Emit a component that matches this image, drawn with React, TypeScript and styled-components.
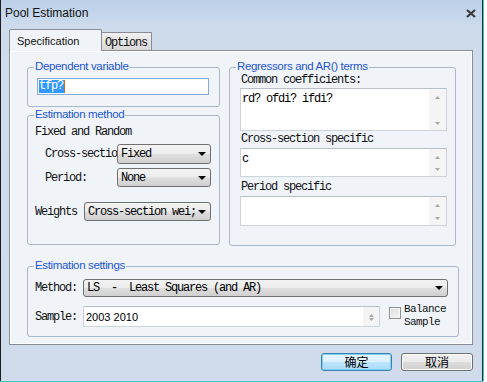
import React from 'react';
import styled, { createGlobalStyle } from 'styled-components';

const MONO = `"Liberation Mono", "DejaVu Sans Mono", monospace`;
const SANS = `"Liberation Sans", Arial, sans-serif`;
const CJK = `"Noto Sans CJK SC", "Liberation Sans", sans-serif`;
const PAGE_BG = '#f0f4f9';
const MONO_SIZE = '12px';
const MONO_SPACING = '-1.2px';

const Global = createGlobalStyle`
  html, body { margin: 0; padding: 0; background: #ffffff; }
  body { width: 487px; height: 382px; overflow: hidden; }
`;

const Window = styled.div`
  box-sizing: border-box;
  width: 483px;
  height: 381px;
  background: linear-gradient(#bcd0e8 0px, #c6d7ec 16px, #cedbeb 28px, #d0dcec 100%);
  border-left: 1px solid #1d1d1d;
  border-right: 1px solid #2a2a2a;
  box-shadow: 1px 0 0 #3ec6cf, 0 1px 0 #3ec6cf;
  display: flex;
  flex-direction: column;
`;

const TitleBar = styled.div`
  height: 29px;
  display: flex;
  align-items: flex-start;
  justify-content: space-between;
  padding: 6px 6px 0 4px;
  box-sizing: border-box;
`;

const Title = styled.div`
  font-family: ${SANS};
  font-size: 12px;
  line-height: 14px;
  color: #111;
`;

const CloseBtn = styled.div`
  width: 10px;
  height: 14px;
  display: flex;
  align-items: center;
  justify-content: center;
`;

const Body = styled.div`
  display: flex;
  flex-direction: column;
  padding: 0 9px 0 8px;
`;

const TabStrip = styled.div`
  display: flex;
  align-items: flex-end;
  height: 22px;
  margin-bottom: -1px;
  position: relative;
  z-index: 1;
`;

const ActiveTab = styled.div`
  box-sizing: border-box;
  width: 93px;
  height: 22px;
  background: ${PAGE_BG};
  border: 1px solid #898c95;
  border-bottom: none;
  border-radius: 2px 2px 0 0;
  font-family: ${SANS};
  font-size: 11px;
  line-height: 14px;
  padding: 4px 0 0 7px;
  color: #111;
`;

const InactiveTab = styled.div`
  box-sizing: border-box;
  width: 50px;
  height: 18px;
  margin-bottom: 1px;
  background: linear-gradient(#f0f0f0, #e4e4e4 50%, #d8d8d8);
  border: 1px solid #898c95;
  border-left: none;
  border-bottom: none;
  font-family: ${MONO};
  font-size: ${MONO_SIZE};
  letter-spacing: ${MONO_SPACING};
  line-height: 14px;
  padding: 3px 0 0 3px;
  color: #111;
`;

const Page = styled.div`
  box-sizing: border-box;
  width: 464px;
  height: 295px;
  background: ${PAGE_BG};
  border: 1px solid #898c95;
  box-shadow: inset 1px 1px 0 #ffffff, inset -1px -1px 0 #ffffff;
  padding: 16px 0 0 17px;
  display: grid;
  grid-template-columns: 193px 227px;
  column-gap: 9px;
  row-gap: 12px;
  align-items: start;
`;

const LeftCol = styled.div`
  display: flex;
  flex-direction: column;
  gap: 8px;
`;

const Group = styled.div<{ $h: number; $w?: number; $pt: number; $pl: number; $span?: boolean }>`
  position: relative;
  box-sizing: border-box;
  height: ${p => p.$h}px;
  width: ${p => (p.$w ? `${p.$w}px` : 'auto')};
  border: 1px solid #a9b7ca;
  border-radius: 3px;
  padding: ${p => p.$pt}px 0 0 ${p => p.$pl}px;
  grid-column: ${p => (p.$span ? '1 / span 2' : 'auto')};
  display: flex;
  flex-direction: column;
  align-items: flex-start;
`;

const Legend = styled.div`
  position: absolute;
  top: -8px;
  left: 6px;
  padding: 0 1px;
  background: ${PAGE_BG};
  font-family: ${SANS};
  font-size: 11.5px;
  letter-spacing: -0.35px;
  line-height: 13px;
  color: #1d55d4;
  white-space: nowrap;
`;

const MonoText = styled.div<{ $mt?: number; $ml?: number }>`
  font-family: ${MONO};
  font-size: ${MONO_SIZE};
  letter-spacing: ${MONO_SPACING};
  line-height: 14px;
  color: #111;
  white-space: nowrap;
  margin-top: ${p => p.$mt || 0}px;
  margin-left: ${p => p.$ml || 0}px;
`;

const FieldRow = styled.div<{ $mt: number; $indent: number }>`
  display: flex;
  align-items: center;
  margin-top: ${p => p.$mt}px;
  margin-left: ${p => p.$indent}px;
`;

const FieldLabel = styled.div<{ $w: number }>`
  width: ${p => p.$w}px;
  flex: none;
  white-space: nowrap;
  font-family: ${MONO};
  font-size: ${MONO_SIZE};
  letter-spacing: ${MONO_SPACING};
  line-height: 14px;
  color: #111;
`;

const Combo = styled.div<{ $w: number; $h: number }>`
  box-sizing: border-box;
  width: ${p => p.$w}px;
  height: ${p => p.$h}px;
  border: 1px solid #707070;
  border-radius: 3px;
  background: linear-gradient(#f3f3f3, #ebebeb 48%, #dedede 52%, #d0d0d0);
  display: flex;
  align-items: center;
  justify-content: space-between;
  padding: 0 4px 0 3px;
`;

const ComboText = styled.span`
  font-family: ${MONO};
  font-size: ${MONO_SIZE};
  letter-spacing: ${MONO_SPACING};
  line-height: 14px;
  color: #000;
  white-space: pre;
`;

const EditBox = styled.div<{ $w: number; $h: number }>`
  box-sizing: border-box;
  width: ${p => p.$w}px;
  height: ${p => p.$h}px;
  border: 1px solid #86aad6;
  background: #ffffff;
  display: flex;
  align-items: center;
  padding-left: 1px;
`;

const Selected = styled.span`
  background: #3399ff;
  color: #ffffff;
  font-family: ${MONO};
  font-size: ${MONO_SIZE};
  letter-spacing: ${MONO_SPACING};
  line-height: 13px;
  padding-right: 1px;
`;

const Caret = styled.span`
  width: 1px;
  height: 13px;
  background: #d2691e;
`;

const Memo = styled.div<{ $h: number; $w: number; $mt: number }>`
  box-sizing: border-box;
  width: ${p => p.$w}px;
  height: ${p => p.$h}px;
  margin-top: ${p => p.$mt}px;
  border: 1px solid #cdd3da;
  border-top-color: #b8bfc8;
  background: #ffffff;
  display: flex;
`;

const MemoText = styled.div<{ $sans?: boolean }>`
  flex: 1;
  padding: ${p => (p.$sans ? '3px 2px' : '3px 1px')};
  font-family: ${p => (p.$sans ? SANS : MONO)};
  font-size: ${p => (p.$sans ? '11px' : MONO_SIZE)};
  letter-spacing: ${p => (p.$sans ? '0' : MONO_SPACING)};
  line-height: 14px;
  color: #000;
  white-space: pre;
`;

const ScrollStrip = styled.div<{ $w: number }>`
  width: ${p => p.$w}px;
  background: #f4f4f4;
  display: flex;
  flex-direction: column;
  justify-content: space-between;
  align-items: center;
  padding: 7px 0 5px;
  box-sizing: border-box;
`;

const CheckBox = styled.div`
  box-sizing: border-box;
  flex: none;
  width: 12px;
  height: 12px;
  border: 1px solid #8e8f8f;
  background: linear-gradient(135deg, #dcdcdc, #f4f4f4);
  box-shadow: inset 0 0 0 1px #f4f4f4;
  margin: 2px 3px 0 9px;
  align-self: flex-start;
`;

const CheckLabel = styled.div`
  display: flex;
  flex-direction: column;
  font-family: ${MONO};
  font-size: 11px;
  letter-spacing: -0.6px;
  line-height: 13px;
  color: #111;
  margin-top: -2px;
`;

const ButtonRow = styled.div`
  display: flex;
  justify-content: flex-end;
  gap: 9px;
  margin-top: 8px;
`;

const Button = styled.div<{ $default?: boolean; $w: number }>`
  box-sizing: border-box;
  width: ${p => p.$w}px;
  height: 18px;
  border: 1px solid ${p => (p.$default ? '#3c7fb1' : '#707070')};
  border-radius: 3px;
  background: ${p =>
    p.$default
      ? 'linear-gradient(#eaf6fd, #d9f0fc 48%, #bee6fd 52%, #a7d9f5)'
      : 'linear-gradient(#f2f2f2, #ebebeb 48%, #dddddd 52%, #cfcfcf)'};
  box-shadow: ${p => (p.$default ? 'inset 0 0 0 1px #7fd0f5' : 'inset 0 0 0 1px #fbfbfb')};
  display: flex;
  align-items: center;
  justify-content: center;
  font-family: ${CJK};
  font-size: 12px;
  line-height: 14px;
  color: #000;
`;

const Tri = ({ dir, w, h, color }: { dir: 'up' | 'down'; w: number; h: number; color: string }) => (
  <svg width={w} height={h} viewBox={`0 0 ${w} ${h}`} style={{ display: 'block', flex: 'none' }}>
    <polygon
      points={dir === 'up' ? `0,${h} ${w},${h} ${w / 2},0` : `0,0 ${w},0 ${w / 2},${h}`}
      fill={color}
    />
  </svg>
);

const Scroller = ({ w }: { w: number }) => (
  <ScrollStrip $w={w}>
    <Tri dir="up" w={5} h={3} color="#a8a8a8" />
    <Tri dir="down" w={5} h={3} color="#a8a8a8" />
  </ScrollStrip>
);

const DropArrow = () => <Tri dir="down" w={8} h={4} color="#000" />;

export default function App() {
  return (
    <>
      <Global />
      <Window>
        <TitleBar>
          <Title>Pool Estimation</Title>
          <CloseBtn>
            <svg width="10" height="9" viewBox="0 0 10 9">
              <path d="M1 1 L9 8 M9 1 L1 8" stroke="#3a3a3a" strokeWidth="2.2" />
            </svg>
          </CloseBtn>
        </TitleBar>
        <Body>
          <TabStrip>
            <ActiveTab>Specification</ActiveTab>
            <InactiveTab>Options</InactiveTab>
          </TabStrip>
          <Page>
            <LeftCol>
              <Group $h={40} $pt={10} $pl={9}>
                <Legend>Dependent variable</Legend>
                <EditBox $w={172} $h={17}>
                  <Selected>tfp?</Selected>
                  <Caret />
                </EditBox>
              </Group>
              <Group $h={130} $pt={9} $pl={7}>
                <Legend>Estimation method</Legend>
                <MonoText>Fixed and Random</MonoText>
                <FieldRow $mt={5} $indent={10}>
                  <FieldLabel $w={72}>Cross-sectio</FieldLabel>
                  <Combo $w={94} $h={20}>
                    <ComboText>Fixed</ComboText>
                    <DropArrow />
                  </Combo>
                </FieldRow>
                <FieldRow $mt={4} $indent={10}>
                  <FieldLabel $w={72}>Period:</FieldLabel>
                  <Combo $w={94} $h={19}>
                    <ComboText>None</ComboText>
                    <DropArrow />
                  </Combo>
                </FieldRow>
                <FieldRow $mt={15} $indent={0}>
                  <FieldLabel $w={49}>Weights</FieldLabel>
                  <Combo $w={127} $h={19}>
                    <ComboText>Cross-section wei;</ComboText>
                    <DropArrow />
                  </Combo>
                </FieldRow>
              </Group>
            </LeftCol>
            <Group $h={179} $pt={5} $pl={10}>
              <Legend>Regressors and AR() terms</Legend>
              <MonoText $ml={1}>Common coefficients:</MonoText>
              <Memo $w={207} $h={43} $mt={1}>
                <MemoText>rd? ofdi? ifdi?</MemoText>
                <Scroller w={17} />
              </Memo>
              <MonoText $ml={1} $mt={1}>Cross-section specific</MonoText>
              <Memo $w={207} $h={29} $mt={2}>
                <MemoText>c</MemoText>
                <Scroller w={17} />
              </Memo>
              <MonoText $ml={1} $mt={3}>Period specific</MonoText>
              <Memo $w={207} $h={30} $mt={2}>
                <MemoText />
                <Scroller w={17} />
              </Memo>
            </Group>
            <Group $h={71} $w={432} $pt={12} $pl={7} $span>
              <Legend>Estimation settings</Legend>
              <FieldRow $mt={0} $indent={0}>
                <FieldLabel $w={48}>Method:</FieldLabel>
                <Combo $w={365} $h={18}>
                  <ComboText>{'LS  -  Least Squares (and AR)'}</ComboText>
                  <DropArrow />
                </Combo>
              </FieldRow>
              <FieldRow $mt={8} $indent={0}>
                <FieldLabel $w={48}>Sample:</FieldLabel>
                <Memo $w={297} $h={21} $mt={0}>
                  <MemoText $sans>2003 2010</MemoText>
                  <Scroller w={16} />
                </Memo>
                <CheckBox />
                <CheckLabel>
                  <span>Balance</span>
                  <span>Sample</span>
                </CheckLabel>
              </FieldRow>
            </Group>
          </Page>
          <ButtonRow>
            <Button $default $w={71}>确定</Button>
            <Button $w={72}>取消</Button>
          </ButtonRow>
        </Body>
      </Window>
    </>
  );
}
